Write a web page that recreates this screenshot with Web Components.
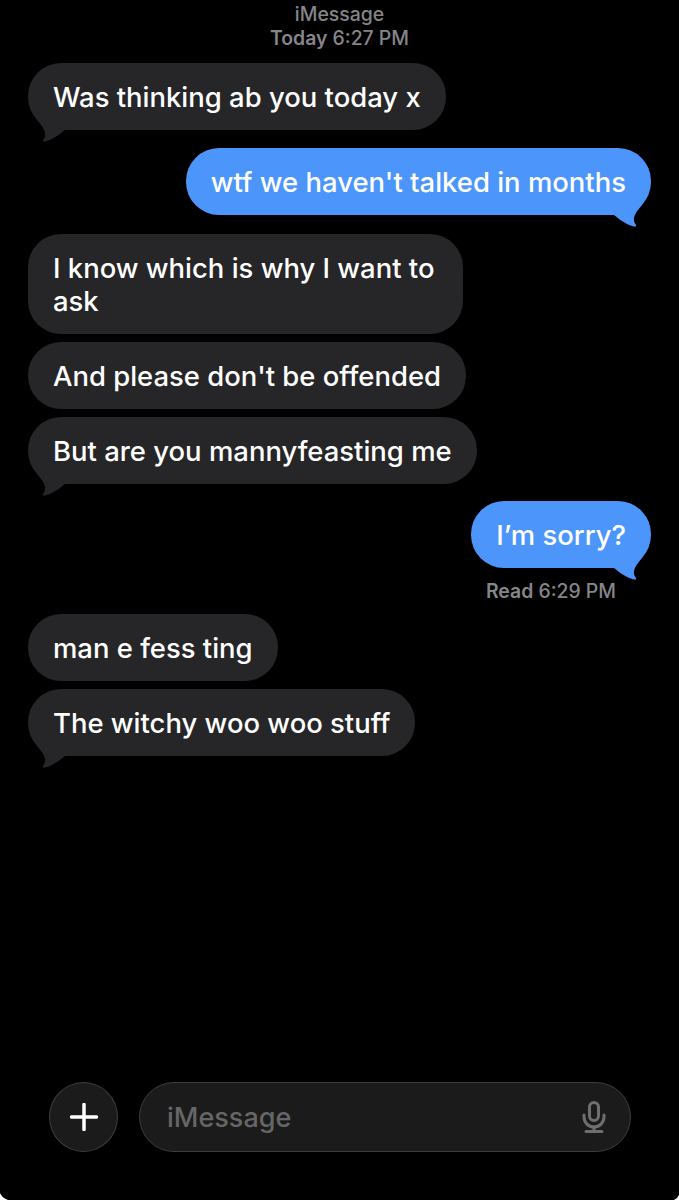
<!DOCTYPE html>
<html>
<head>
<meta charset="utf-8">
<style>
  html, body { margin: 0; background: #000; }
  body { position: relative; width: 679px; height: 1200px; overflow: hidden; display: flex; flex-direction: column; font-family: Inter, "Liberation Sans", sans-serif; }
</style>
</head>
<body>
<chat-thread>
  <chat-stamp label="iMessage" strong="Today" time="6:27 PM"></chat-stamp>
  <chat-bubble tail style="margin-top:13px">Was thinking ab you today x</chat-bubble>
  <chat-bubble mine tail style="margin-top:18px">wtf we haven't talked in months</chat-bubble>
  <chat-bubble style="margin-top:19px;width:435px">I know which is why I want to ask</chat-bubble>
  <chat-bubble style="margin-top:8px">And please don't be offended</chat-bubble>
  <chat-bubble tail style="margin-top:8px">But are you mannyfeasting me</chat-bubble>
  <chat-bubble mine tail style="margin-top:17px">I’m sorry?</chat-bubble>
  <chat-receipt strong="Read" time="6:29 PM"></chat-receipt>
  <chat-bubble style="margin-top:11px">man e fess ting</chat-bubble>
  <chat-bubble tail style="margin-top:8px">The witchy woo woo stuff</chat-bubble>
</chat-thread>
<chat-composer placeholder="iMessage"></chat-composer>
<screen-corners></screen-corners>

<script>
class ChatThread extends HTMLElement {
  constructor() {
    super();
    this.attachShadow({ mode: 'open' });
    this.shadowRoot.innerHTML = `
      <style>
        :host { display: flex; flex-direction: column; flex: 1; padding: 0 28px; min-height: 0; }
      </style>
      <slot></slot>`;
  }
}

class ChatStamp extends HTMLElement {
  constructor() {
    super();
    this.attachShadow({ mode: 'open' });
    this.shadowRoot.innerHTML = `
      <style>
        :host { display: block; padding-top: 2px; text-align: center; color: #85858a; font-size: 19.400px; line-height: 24px; font-weight: 500; }
        b { font-weight: 600; }
      </style>
      <div>${this.getAttribute('label')}</div>
      <div><b>${this.getAttribute('strong')}</b> ${this.getAttribute('time')}</div>`;
  }
}

class ChatReceipt extends HTMLElement {
  constructor() {
    super();
    this.attachShadow({ mode: 'open' });
    this.shadowRoot.innerHTML = `
      <style>
        :host { display: block; align-self: flex-end; margin-top: 12px; padding-right: 35px; color: #85858a; font-size: 19.400px; line-height: 23px; font-weight: 500; }
        b { font-weight: 600; }
      </style>
      <b>${this.getAttribute('strong')}</b> ${this.getAttribute('time')}`;
  }
}

class ChatBubble extends HTMLElement {
  constructor() {
    super();
    this.attachShadow({ mode: 'open' });
    const tail = this.hasAttribute('tail') ? `
      <svg class="tail" width="40" height="40" viewBox="0 0 40 40">
        <path d="M7 14 C10 19 16 24 17 30 C17.500 33 16.500 35 15 37 C14.500 38.500 15.500 39 17 38.600 C24 37 31 32 37 27 L37 14 Z"/>
      </svg>` : '';
    this.shadowRoot.innerHTML = `
      <style>
        :host { display: block; box-sizing: border-box; position: relative; align-self: flex-start; padding: 18px 25px 16px; border-radius: 33px; background: #262628; color: #fff; font-size: 27.450px; line-height: 33px; font-weight: 500; }
        :host([mine]) { align-self: flex-end; background: #4c96fb; }
        .tail { position: absolute; left: 0; bottom: -13px; fill: #262628; }
        :host([mine]) .tail { left: auto; right: 0; fill: #4c96fb; transform: scaleX(-1); }
      </style>
      <slot></slot>${tail}`;
  }
}

class ChatComposer extends HTMLElement {
  constructor() {
    super();
    this.attachShadow({ mode: 'open' });
    this.shadowRoot.innerHTML = `
      <style>
        :host { display: flex; align-items: stretch; gap: 21px; padding: 0 48px 48px 49px; height: 70px; }
        .plus, .field { box-sizing: border-box; background: #1b1b1b; border: 1.500px solid #3d3d3d; }
        .plus { flex: none; width: 69px; border-radius: 50%; display: flex; align-items: center; justify-content: center; }
        .field { flex: 1; border-radius: 35px; display: flex; align-items: center; justify-content: space-between; padding: 0 24px 0 27px; color: #666; font-size: 27px; font-weight: 500; }
      </style>
      <div class="plus">
        <svg width="28" height="28" viewBox="0 0 28 28"><path d="M14 1.500V26.500M1.500 14H26.500" stroke="#fff" stroke-width="3.500" stroke-linecap="round"/></svg>
      </div>
      <div class="field">
        <span>${this.getAttribute('placeholder')}</span>
        <svg width="24" height="32" viewBox="0 0 24 32" fill="none" stroke="#6e6e6e" stroke-width="3" stroke-linecap="round">
          <rect x="7.500" y="1.500" width="9" height="18" rx="4.500"/>
          <path d="M2 14v2a10 10 0 0 0 20 0v-2"/>
          <path d="M12 26v4M4 30.500h16"/>
        </svg>
      </div>`;
  }
}

// the white bits of the phone corner at the bottom of the shot
class ScreenCorners extends HTMLElement {
  constructor() {
    super();
    this.attachShadow({ mode: 'open' });
    this.shadowRoot.innerHTML = `
      <style>
        :host { display: block; position: absolute; left: 0; right: 0; bottom: 0; height: 8px; pointer-events: none; }
        svg { position: absolute; bottom: 0; fill: #fff; }
        .l { left: 0; }
        .r { right: 0; }
      </style>
      <svg class="l" width="8" height="8" viewBox="0 0 8 8"><path d="M0 1 Q2 6 8 8 H0 Z"/></svg>
      <svg class="r" width="6" height="6" viewBox="0 0 6 6"><path d="M6 1 Q4.500 4.500 1 6 H6 Z"/></svg>`;
  }
}

customElements.define('chat-thread', ChatThread);
customElements.define('chat-stamp', ChatStamp);
customElements.define('chat-receipt', ChatReceipt);
customElements.define('chat-bubble', ChatBubble);
customElements.define('chat-composer', ChatComposer);
customElements.define('screen-corners', ScreenCorners);
</script>
</body>
</html>
